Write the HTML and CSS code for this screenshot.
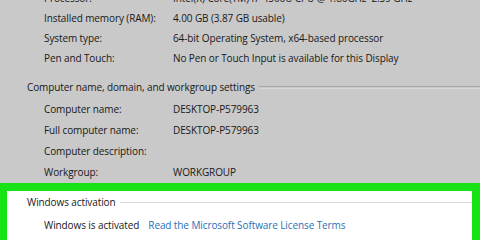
FILE: index.html
```html
<!DOCTYPE html>
<html lang="en">
<head>
    <meta charset="UTF-8">
    <title>System</title>
    <link rel="stylesheet" href="styles.css">
</head>
<body>
    <div class="panel">
        <div class="rows rows-hw">
            <div class="row"><span class="label">Processor:</span><span class="value">Intel(R) Core(TM) i7-4500U CPU @ 1.80GHz &nbsp;2.39 GHz</span></div>
            <div class="row"><span class="label">Installed memory (RAM):</span><span class="value">4.00 GB (3.87 GB usable)</span></div>
            <div class="row"><span class="label">System type:</span><span class="value">64-bit Operating System, x64-based processor</span></div>
            <div class="row"><span class="label">Pen and Touch:</span><span class="value">No Pen or Touch Input is available for this Display</span></div>
        </div>

        <div class="section-title"><span>Computer name, domain, and workgroup settings</span></div>
        <div class="rows rows-name">
            <div class="row"><span class="label">Computer name:</span><span class="value">DESKTOP-P579963</span></div>
            <div class="row"><span class="label">Full computer name:</span><span class="value">DESKTOP-P579963</span></div>
            <div class="row"><span class="label">Computer description:</span><span class="value"></span></div>
            <div class="row"><span class="label">Workgroup:</span><span class="value">WORKGROUP</span></div>
        </div>

        <div class="highlight">
            <div class="section-title light"><span>Windows activation</span></div>
            <div class="activation">
                <span>Windows is activated</span>
                <a href="#" class="link">Read the Microsoft Software License Terms</a>
            </div>
        </div>
    </div>
</body>
</html>
```

FILE: styles.css
```css
body {
    margin: 0;
    background: #c9c9c9;
    font-family: "Open Sans", "Noto Sans", sans-serif;
    font-size: 10px;
    letter-spacing: -0.1px;
    color: #181818;
    overflow: hidden;
}
.panel {
    width: 480px;
    height: 240px;
    overflow: hidden;
}
.rows {
    padding-left: 44px;
}
.rows-hw {
    margin-top: -12px;
}
.row {
    display: grid;
    grid-template-columns: 129px 1fr;
    height: 20px;
    align-items: center;
    white-space: nowrap;
}
.rows-name .row {
    height: 21px;
}
.section-title {
    display: flex;
    align-items: center;
    gap: 4px;
    height: 20px;
    padding-left: 27px;
    margin-top: 9px;
    white-space: nowrap;
}
.section-title::after {
    content: "";
    flex: 1;
    height: 1px;
    border-top: 1px solid #a9a9a9;
    border-bottom: 1px solid #d8d8d8;
    margin-top: 1px;
}
.rows-name {
    margin-top: 1.5px;
}
.highlight {
    background: #ffffff;
    border: 8px solid #16e216;
    border-left-width: 7px;
    height: 60px;
}
.section-title.light {
    margin-top: 1px;
    padding-left: 20px;
}
.section-title.light::after {
    border-top: 1px solid #dadada;
    border-bottom: none;
    height: 0;
}
.activation {
    display: flex;
    align-items: center;
    gap: 9px;
    height: 20px;
    margin-top: 3px;
    padding-left: 37px;
    white-space: nowrap;
}
.link {
    color: #2a6fb8;
    text-decoration: none;
}
```
